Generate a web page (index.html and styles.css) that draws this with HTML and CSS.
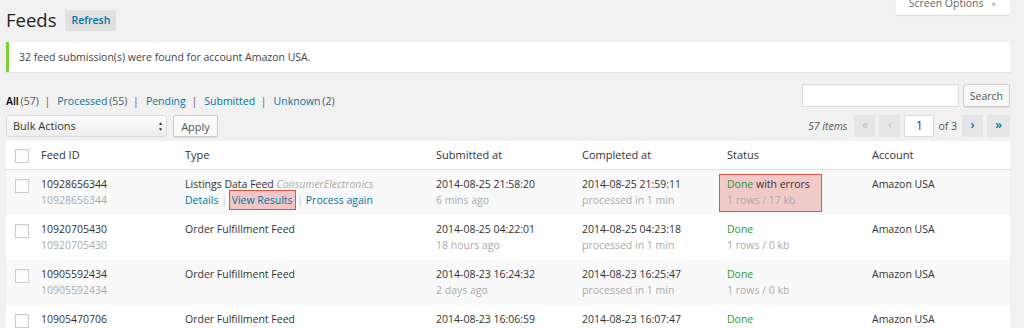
FILE: index.html
```html
<!DOCTYPE html>
<html lang="en">
<head>
    <meta charset="UTF-8">
    <title>Feeds</title>
    <link rel="stylesheet" href="styles.css">
</head>
<body>
    <div class="wrap">
        <!-- Title row -->
        <div class="title-row">
            <h1>Feeds</h1>
            <a href="#" class="refresh-button">Refresh</a>
            <div class="screen-options">Screen Options <span class="arrow">&#9660;</span></div>
        </div>

        <div class="notice">32 feed submission(s) were found for account Amazon USA.</div>

        <!-- Filters and search -->
        <div class="filter-row">
            <ul class="subsubsub">
                <li><b>All</b> <span class="count">(57)</span> <span class="sep">|</span></li>
                <li><a href="#">Processed</a> <span class="count">(55)</span> <span class="sep">|</span></li>
                <li><a href="#">Pending</a> <span class="sep">|</span></li>
                <li><a href="#">Submitted</a> <span class="sep">|</span></li>
                <li><a href="#">Unknown</a> <span class="count">(2)</span></li>
            </ul>
            <div class="search-box">
                <input type="text" class="search-input">
                <button class="btn">Search</button>
            </div>
        </div>

        <div class="nav-row">
            <div class="bulk">
                <div class="select">Bulk Actions <span class="updown">&#9650;<br>&#9660;</span></div>
                <button class="btn">Apply</button>
            </div>
            <div class="pages">
                <span class="items">57 items</span>
                <span class="page-btn disabled">&laquo;</span>
                <span class="page-btn disabled">&lsaquo;</span>
                <span class="page-input">1</span>
                <span class="of">of 3</span>
                <span class="page-btn">&rsaquo;</span>
                <span class="page-btn">&raquo;</span>
            </div>
        </div>

        <table class="feeds">
            <colgroup>
                <col class="c-cb"><col class="c-id"><col class="c-type"><col class="c-sub"><col class="c-comp"><col class="c-status"><col class="c-acc">
            </colgroup>
            <thead>
                <tr>
                    <th><span class="cb"></span></th>
                    <th>Feed ID</th>
                    <th>Type</th>
                    <th>Submitted at</th>
                    <th>Completed at</th>
                    <th>Status</th>
                    <th>Account</th>
                </tr>
            </thead>
            <tbody>
                <tr class="alt">
                    <td><span class="cb"></span></td>
                    <td>10928656344<br><span class="muted">10928656344</span></td>
                    <td>Listings Data Feed <i class="muted">ConsumerElectronics</i><br>
                        <span class="row-actions"><a href="#">Details</a> <span class="bar">|</span> <a href="#" class="mark">View Results</a> <span class="bar">|</span> <a href="#">Process again</a></span>
                    </td>
                    <td>2014-08-25 21:58:20<br><span class="muted">6 mins ago</span></td>
                    <td>2014-08-25 21:59:11<br><span class="muted">processed in 1 min</span></td>
                    <td class="hl-cell"><div class="mark-box"><span class="done">Done</span> with errors<br><span class="muted">1 rows / 17 kb</span></div></td>
                    <td>Amazon USA</td>
                </tr>
                <tr>
                    <td><span class="cb"></span></td>
                    <td>10920705430<br><span class="muted">10920705430</span></td>
                    <td>Order Fulfillment Feed</td>
                    <td>2014-08-25 04:22:01<br><span class="muted">18 hours ago</span></td>
                    <td>2014-08-25 04:23:18<br><span class="muted">processed in 1 min</span></td>
                    <td><span class="done">Done</span><br><span class="muted">1 rows / 0 kb</span></td>
                    <td>Amazon USA</td>
                </tr>
                <tr class="alt">
                    <td><span class="cb"></span></td>
                    <td>10905592434<br><span class="muted">10905592434</span></td>
                    <td>Order Fulfillment Feed</td>
                    <td>2014-08-23 16:24:32<br><span class="muted">2 days ago</span></td>
                    <td>2014-08-23 16:25:47<br><span class="muted">processed in 1 min</span></td>
                    <td><span class="done">Done</span><br><span class="muted">1 rows / 0 kb</span></td>
                    <td>Amazon USA</td>
                </tr>
                <tr>
                    <td><span class="cb"></span></td>
                    <td>10905470706<br><span class="muted">10905470706</span></td>
                    <td>Order Fulfillment Feed</td>
                    <td>2014-08-23 16:06:59<br><span class="muted">2 days ago</span></td>
                    <td>2014-08-23 16:07:47<br><span class="muted">processed in 1 min</span></td>
                    <td><span class="done">Done</span><br><span class="muted">1 rows / 0 kb</span></td>
                    <td>Amazon USA</td>
                </tr>
            </tbody>
        </table>
    </div>
</body>
</html>
```

FILE: styles.css
```css
body {
    font-family: 'Open Sans', sans-serif;
    font-size: 10.5px;
    margin: 0;
    padding: 0;
    background-color: #f1f1f1;
    color: #444;
}
a {
    color: #0074a2;
    text-decoration: none;
}
.wrap {
    padding: 0 14px 0 6px;
}
.title-row {
    display: flex;
    align-items: flex-start;
    height: 42px;
}
h1 {
    font-size: 18.5px;
    font-weight: 400;
    color: #222;
    margin: 8px 9px 0 0;
    line-height: 24px;
}
.refresh-button {
    margin-top: 10px;
    background-color: #e0e0e0;
    color: #0074a2;
    font-weight: 600;
    padding: 3px 6px;
    line-height: 15px;
    border-radius: 2px;
}
.screen-options {
    margin-left: auto;
    margin-top: -7px;
    width: 114px;
    height: 22px;
    box-sizing: border-box;
    background: #fff;
    box-shadow: 0 1px 1px rgba(0, 0, 0, 0.08);
    color: #666;
    text-align: center;
    line-height: 20px;
}
.screen-options .arrow {
    color: #bbb;
    font-size: 7px;
    margin-left: 4px;
}
.notice {
    background: #fff;
    border-left: 3px solid #7ad03a;
    box-shadow: 0 1px 1px rgba(0, 0, 0, 0.06);
    padding: 0 10px;
    line-height: 30px;
    color: #444;
}
.filter-row {
    display: flex;
    justify-content: space-between;
    align-items: flex-end;
    margin-top: 12px;
}
.subsubsub {
    list-style: none;
    margin: 0 0 -1px;
    padding: 0;
    display: flex;
    color: #666;
}
.subsubsub li {
    margin-right: 4px;
}
.subsubsub b {
    color: #000;
    font-weight: 600;
}
.subsubsub .count {
    color: #555;
    margin-left: -1px;
}
.subsubsub .sep {
    margin: 0 3px;
}
.search-box {
    display: flex;
    gap: 4px;
}
.search-input {
    width: 157px;
    height: 23px;
    box-sizing: border-box;
    border: 1px solid #ddd;
    background: #fff;
    box-shadow: inset 0 1px 2px rgba(0, 0, 0, 0.07);
    margin: 0;
}
.btn {
    font-family: 'Open Sans', sans-serif;
    font-size: 10.5px;
    color: #555;
    background: #f7f7f7;
    border: 1px solid #ccc;
    border-radius: 2px;
    box-shadow: 0 1px 0 #fff inset, 0 1px 0 rgba(0, 0, 0, 0.08);
    height: 23px;
    padding: 0 6px;
    cursor: pointer;
}
.nav-row {
    display: flex;
    justify-content: space-between;
    align-items: center;
    margin-top: 8px;
    height: 22px;
}
.bulk {
    display: flex;
    gap: 6px;
}
.select {
    width: 161px;
    height: 22px;
    box-sizing: border-box;
    border: 1px solid #ddd;
    border-radius: 3px;
    background: linear-gradient(#fdfdfd, #ececec);
    color: #333;
    font-size: 11px;
    line-height: 20px;
    padding-left: 6px;
    position: relative;
}
.select .updown {
    position: absolute;
    right: 3px;
    top: 4px;
    font-size: 5px;
    line-height: 6px;
    color: #333;
}
.bulk .btn {
    width: 45px;
    height: 22px;
    background: #fafafa;
    font-size: 11px;
}
.pages {
    display: flex;
    align-items: center;
    gap: 4px;
    color: #555;
}
.pages .items {
    font-style: italic;
    margin-right: 3px;
}
.page-btn {
    width: 21px;
    height: 22px;
    line-height: 20px;
    text-align: center;
    background: #e6e6e6;
    color: #0074a2;
    font-size: 12px;
    font-weight: 600;
}
.page-btn.disabled {
    color: #bbb;
    font-weight: 400;
}
.page-btn:last-child {
    width: 23px;
}
.page-input {
    width: 30px;
    height: 22px;
    box-sizing: border-box;
    background: #fff;
    border: 1px solid #ddd;
    text-align: center;
    line-height: 20px;
    font-size: 12px;
    color: #333;
}
.of {
    margin-right: 1px;
}
table.feeds {
    width: 1004px;
    table-layout: fixed;
    border-collapse: collapse;
    margin-top: 4px;
    background: #fff;
    box-shadow: 0 1px 1px rgba(0, 0, 0, 0.04);
}
.c-cb { width: 27px; }
.c-id { width: 144px; }
.c-type { width: 251px; }
.c-sub { width: 146px; }
.c-comp { width: 145px; }
.c-status { width: 145px; }
.c-acc { width: 146px; }
th {
    text-align: left;
    font-weight: 400;
    font-size: 11px;
    color: #333;
    padding: 6px 8px;
    line-height: 16px;
    border-bottom: 1px solid #e1e1e1;
}
td {
    vertical-align: top;
    padding: 7px 8px;
    line-height: 15.5px;
    color: #333;
    white-space: nowrap;
}
th:first-child, td:first-child {
    padding-left: 9px;
    padding-right: 0;
}
tr.alt td {
    background: #f9f9f9;
}
.cb {
    display: inline-block;
    width: 12px;
    height: 12px;
    border: 1px solid #ccc;
    background: #fff;
    vertical-align: middle;
    box-shadow: inset 0 1px 2px rgba(0, 0, 0, 0.05);
}
td .cb {
    margin-top: 1px;
}
.muted {
    color: #aaa;
}
.row-actions .bar {
    color: #ccc;
}
.mark {
    background: rgba(224, 80, 80, 0.3);
    outline: 1px solid #e0533f;
    padding: 2px 2px;
}
.done {
    color: #2b9a2b;
}
td.hl-cell {
    padding: 4px 0 0;
}
.mark-box {
    width: 94px;
    padding: 2px 0 3px 7px;
    background: rgba(224, 80, 80, 0.28);
    border: 1px solid #e0533f;
}
```
